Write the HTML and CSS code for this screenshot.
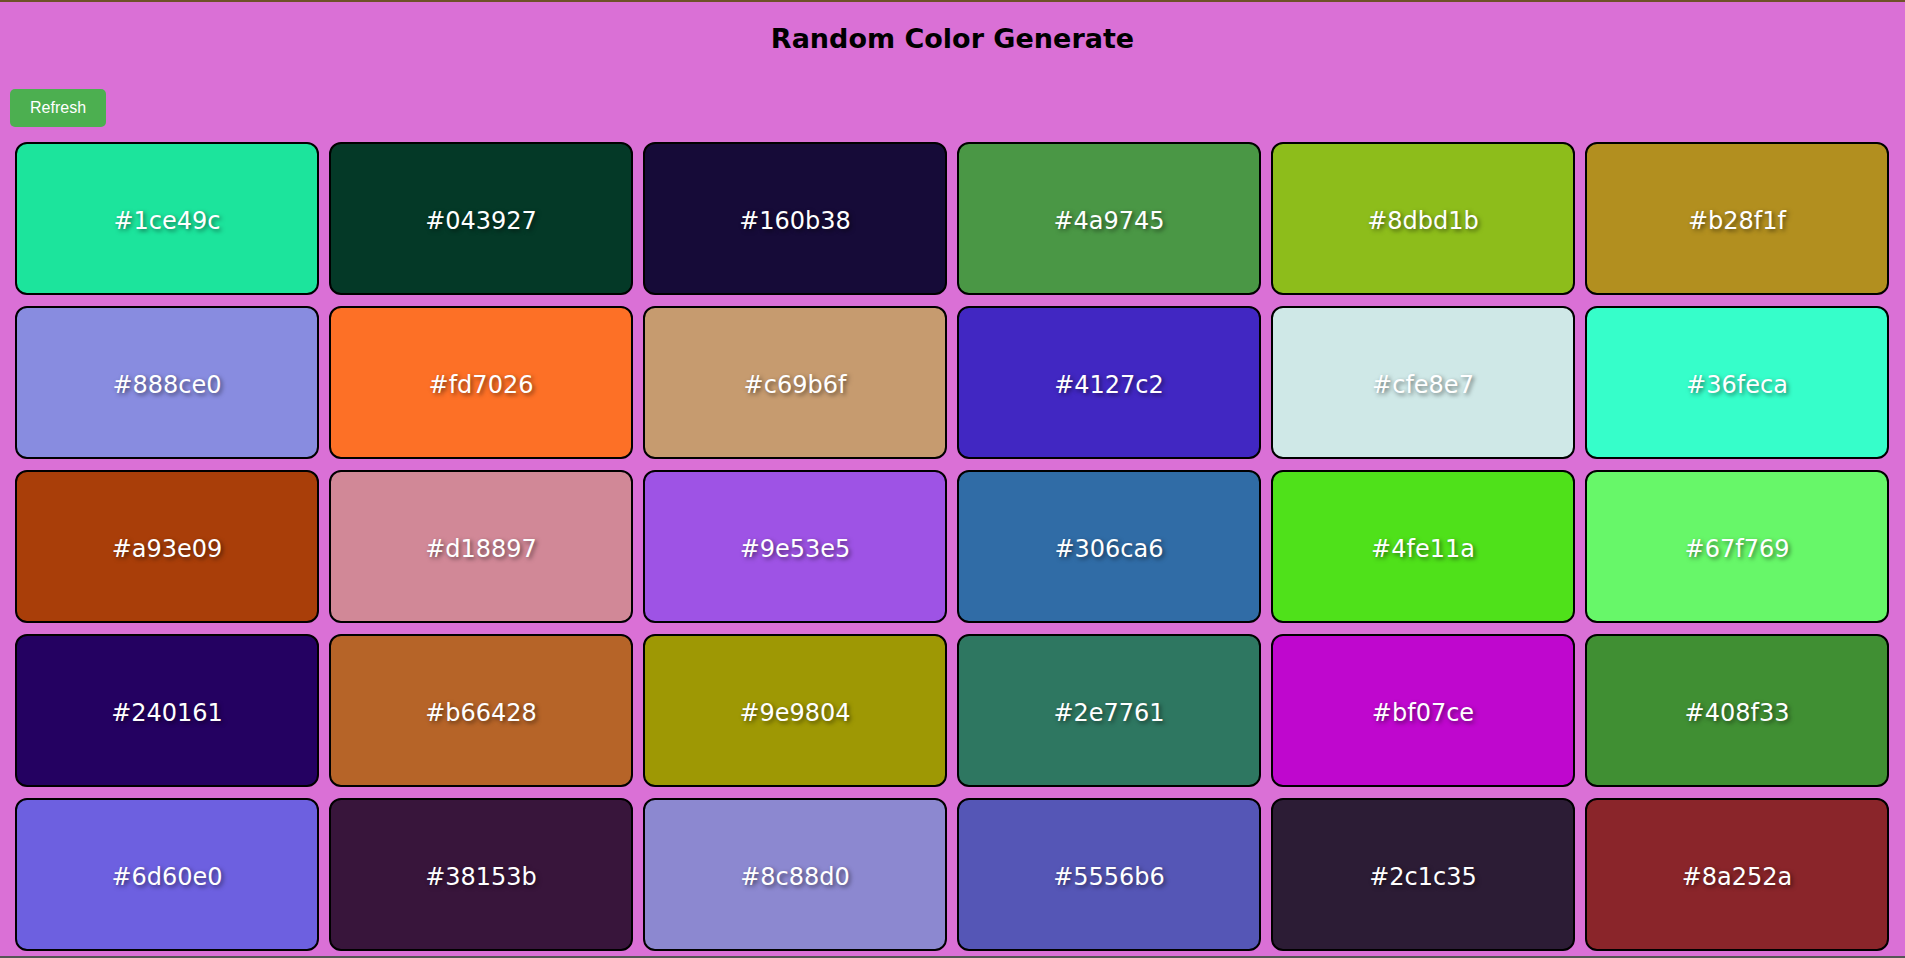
FILE: index.html
```html
<!DOCTYPE html>
<html lang="en">
<head>
<meta charset="utf-8">
<title>Random Color Generate</title>
<link rel="stylesheet" href="styles.css">
</head>
<body>
  <h1 class="title">Random Color Generate</h1>
  <button class="refresh">Refresh</button>
  <div class="grid">
    <div class="card" style="background:#1ce49c">#1ce49c</div>
    <div class="card" style="background:#043927">#043927</div>
    <div class="card" style="background:#160b38">#160b38</div>
    <div class="card" style="background:#4a9745">#4a9745</div>
    <div class="card" style="background:#8dbd1b">#8dbd1b</div>
    <div class="card" style="background:#b28f1f">#b28f1f</div>
    <div class="card" style="background:#888ce0">#888ce0</div>
    <div class="card" style="background:#fd7026">#fd7026</div>
    <div class="card" style="background:#c69b6f">#c69b6f</div>
    <div class="card" style="background:#4127c2">#4127c2</div>
    <div class="card" style="background:#cfe8e7">#cfe8e7</div>
    <div class="card" style="background:#36feca">#36feca</div>
    <div class="card" style="background:#a93e09">#a93e09</div>
    <div class="card" style="background:#d18897">#d18897</div>
    <div class="card" style="background:#9e53e5">#9e53e5</div>
    <div class="card" style="background:#306ca6">#306ca6</div>
    <div class="card" style="background:#4fe11a">#4fe11a</div>
    <div class="card" style="background:#67f769">#67f769</div>
    <div class="card" style="background:#240161">#240161</div>
    <div class="card" style="background:#b66428">#b66428</div>
    <div class="card" style="background:#9e9804">#9e9804</div>
    <div class="card" style="background:#2e7761">#2e7761</div>
    <div class="card" style="background:#bf07ce">#bf07ce</div>
    <div class="card" style="background:#408f33">#408f33</div>
    <div class="card" style="background:#6d60e0">#6d60e0</div>
    <div class="card" style="background:#38153b">#38153b</div>
    <div class="card" style="background:#8c88d0">#8c88d0</div>
    <div class="card" style="background:#5556b6">#5556b6</div>
    <div class="card" style="background:#2c1c35">#2c1c35</div>
    <div class="card" style="background:#8a252a">#8a252a</div>
  </div>
</body>
</html>
```
FILE: styles.css
```css
html {
  margin: 0;
  padding: 0;
}
body {
  margin: 0;
  box-sizing: border-box;
  height: 958px;
  overflow: hidden;
  background: #da70d6;
  border-top: 2px solid #6e5228;
  border-bottom: 2px solid #555555;
  font-family: "DejaVu Sans", "Liberation Sans", sans-serif;
}
.title {
  margin: 21px 0 0;
  font-size: 27px;
  line-height: 32px;
  font-weight: bold;
  text-align: center;
  color: #000;
}
.refresh {
  display: block;
  margin: 34px 0 0 10px;
  padding: 10px 20px;
  border: none;
  border-radius: 5px;
  background: #4caf50;
  color: #fff;
  font-family: "Liberation Sans", Arial, sans-serif;
  font-size: 16px;
  line-height: 18px;
}
.grid {
  margin-top: 15px;
  padding: 0 16px 0 15px;
  display: grid;
  grid-template-columns: repeat(6, 1fr);
  grid-auto-rows: 153px;
  column-gap: 10px;
  row-gap: 11px;
}
.card {
  box-sizing: border-box;
  border: 2px solid #000;
  border-radius: 12px;
  display: flex;
  align-items: center;
  justify-content: center;
  padding-top: 4px;
  color: #fff;
  font-size: 24px;
  text-shadow: 2px 2px 4px rgba(0, 0, 0, 0.5);
}
```
